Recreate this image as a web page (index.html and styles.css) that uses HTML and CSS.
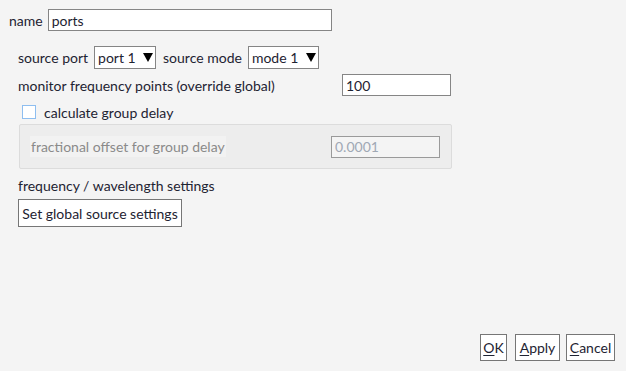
FILE: index.html
```html
<!DOCTYPE html>
<html lang="en">
<head>
  <meta charset="UTF-8">
  <title>ports</title>
  <link rel="stylesheet" href="styles.css">
</head>
<body>
  <div class="dialog">
    <div class="row name-row">
      <span class="label">name</span>
      <div class="field name-field">ports</div>
    </div>

    <div class="section">
      <div class="row source-row">
        <span class="label">source port</span>
        <div class="select port-select"><span>port 1</span><span class="arrow"></span></div>
        <span class="label">source mode</span>
        <div class="select mode-select"><span>mode 1</span><span class="arrow"></span></div>
      </div>

      <div class="row freq-row">
        <span class="label">monitor frequency points (override global)</span>
        <div class="field small-field">100</div>
      </div>

      <div class="row check-row">
        <span class="checkbox"></span>
        <span class="label">calculate group delay</span>
      </div>

      <div class="group disabled">
        <span class="label dim">fractional offset for group delay</span>
        <div class="field small-field dim-field">0.0001</div>
      </div>

      <div class="row heading-row">
        <span class="label">frequency / wavelength settings</span>
      </div>

      <div class="btn wide-btn">Set global source settings</div>
    </div>

    <div class="footer">
      <div class="btn ok-btn"><u>O</u>K</div>
      <div class="btn apply-btn"><u>A</u>pply</div>
      <div class="btn cancel-btn"><u>C</u>ancel</div>
    </div>
  </div>
</body>
</html>
```

FILE: styles.css
```css
* {
  margin: 0;
  padding: 0;
  box-sizing: border-box;
  font-family: Lato, 'Noto Sans', sans-serif;
}

body {
  background-color: #f4f4f4;
  color: #1e2332;
  font-size: 14px;
  width: 626px;
  height: 371px;
  overflow: hidden;
}

.dialog {
  display: flex;
  flex-direction: column;
  height: 371px;
  padding: 9px 11px 10px 9px;
}

.row {
  display: flex;
  align-items: center;
}

.label {
  white-space: nowrap;
}

.field {
  height: 22px;
  background-color: white;
  border: 1px solid #858585;
  padding: 0 3px;
  display: flex;
  align-items: center;
}

.name-row {
  height: 22px;
}

.name-field {
  width: 284px;
  margin-left: 5px;
}

.section {
  padding-left: 9px;
  display: flex;
  flex-direction: column;
  align-items: flex-start;
}

.source-row {
  margin-top: 15px;
  height: 23px;
}

.source-row .label + .select {
  margin-left: 6px;
}

.select {
  height: 23px;
  flex-shrink: 0;
  background-color: white;
  border: 1px solid #858585;
  padding: 0 2px 0 3px;
  display: flex;
  align-items: center;
  margin-right: 7px;
  overflow: hidden;
  white-space: nowrap;
}

.port-select {
  width: 62px;
}

.mode-select {
  width: 71px;
}

.arrow {
  margin-left: auto;
  flex-shrink: 0;
  width: 0;
  height: 0;
  border-left: 5px solid transparent;
  border-right: 5px solid transparent;
  border-top: 9px solid #000;
}

.freq-row {
  margin-top: 5px;
  height: 22px;
  justify-content: space-between;
  width: 433px;
}

.small-field {
  width: 109px;
}

.check-row {
  margin-top: 7px;
  height: 18px;
  padding-left: 4px;
}

.checkbox {
  width: 14px;
  height: 14px;
  border: 1px solid #8ebef0;
  background-color: white;
  margin-right: 8px;
}

.group {
  margin-top: 3px;
  margin-left: 1px;
  width: 433px;
  height: 45px;
  background-color: #ededed;
  border: 1px solid #dcdcdc;
  border-radius: 2px;
  display: flex;
  align-items: center;
  justify-content: space-between;
  padding: 0 11px 0 10px;
}

.dim {
  color: #8a8a8a;
  background-color: #f2f2f2;
  padding: 2px 1px;
}

.dim-field {
  background-color: #f4f4f4;
  border-color: #9a9a9a;
  color: #a0a8b4;
}

.heading-row {
  margin-top: 7px;
  height: 18px;
}

.btn {
  height: 27px;
  flex-shrink: 0;
  background-color: white;
  border: 1px solid #767676;
  padding: 0 3px;
  display: flex;
  align-items: center;
  justify-content: center;
  white-space: nowrap;
}

.wide-btn {
  margin-top: 5px;
  width: 164px;
  height: 28px;
}

.footer {
  margin-top: auto;
  display: flex;
  justify-content: flex-end;
}

.ok-btn {
  width: 27px;
  padding: 0;
}

.apply-btn {
  width: 45px;
  margin-left: 8px;
  padding: 0;
}

.cancel-btn {
  width: 49px;
  margin-left: 6px;
  padding: 0;
}

.footer u {
  text-underline-offset: 2px;
}
```
